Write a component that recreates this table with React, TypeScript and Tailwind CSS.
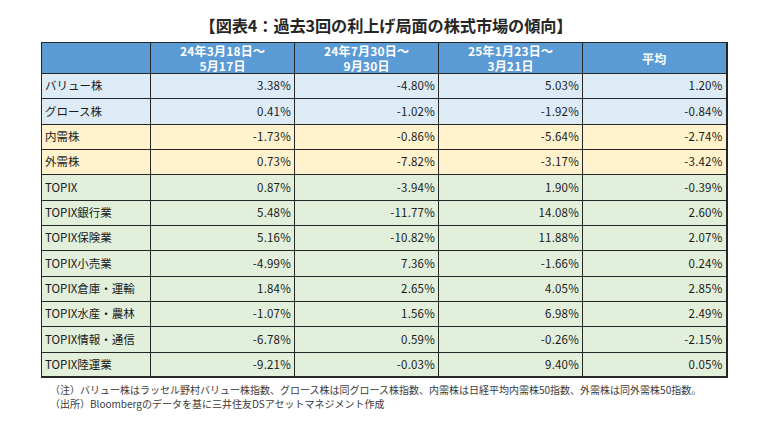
const rows: { label: string; tone: "blue" | "yellow" | "green"; values: string[] }[] = [
  { label: "バリュー株", tone: "blue", values: ["3.38%", "-4.80%", "5.03%", "1.20%"] },
  { label: "グロース株", tone: "blue", values: ["0.41%", "-1.02%", "-1.92%", "-0.84%"] },
  { label: "内需株", tone: "yellow", values: ["-1.73%", "-0.86%", "-5.64%", "-2.74%"] },
  { label: "外需株", tone: "yellow", values: ["0.73%", "-7.82%", "-3.17%", "-3.42%"] },
  { label: "TOPIX", tone: "green", values: ["0.87%", "-3.94%", "1.90%", "-0.39%"] },
  { label: "TOPIX銀行業", tone: "green", values: ["5.48%", "-11.77%", "14.08%", "2.60%"] },
  { label: "TOPIX保険業", tone: "green", values: ["5.16%", "-10.82%", "11.88%", "2.07%"] },
  { label: "TOPIX小売業", tone: "green", values: ["-4.99%", "7.36%", "-1.66%", "0.24%"] },
  { label: "TOPIX倉庫・運輸", tone: "green", values: ["1.84%", "2.65%", "4.05%", "2.85%"] },
  { label: "TOPIX水産・農林", tone: "green", values: ["-1.07%", "1.56%", "6.98%", "2.49%"] },
  { label: "TOPIX情報・通信", tone: "green", values: ["-6.78%", "0.59%", "-0.26%", "-2.15%"] },
  { label: "TOPIX陸運業", tone: "green", values: ["-9.21%", "-0.03%", "9.40%", "0.05%"] },
];

const toneBg = {
  blue: "bg-[#ddebf7]",
  yellow: "bg-[#fff2cc]",
  green: "bg-[#e2efda]",
};

const headers: [string, string?][] = [
  ["24年3月18日～", "5月17日"],
  ["24年7月30日～", "9月30日"],
  ["25年1月23日～", "3月21日"],
  ["平均"],
];

export default function App() {
  return (
    <div className="h-[433px] w-[770px] bg-white font-['Noto_Sans_CJK_JP',sans-serif] text-[#1a1a1a]">
      <h1 className="pt-[14px] pl-[2px] text-center text-[16.2px] font-bold leading-[22px] tracking-[-0.1px] text-[#262626]">
        【図表4：過去3回の利上げ局面の株式市場の傾向】
      </h1>

      <div className="ml-[41px] mt-[6px] w-[685px]">
        <table className="w-full table-fixed border-collapse">
          <colgroup>
            <col className="w-[109px]" />
            <col className="w-[144px]" />
            <col className="w-[144px]" />
            <col className="w-[144px]" />
            <col className="w-[144px]" />
          </colgroup>
          <thead>
            <tr className="h-[31px] bg-[#5b9bd5]">
              <th className="border border-[#262626]" />
              {headers.map((h, i) => (
                <th
                  key={i}
                  className={`border border-[#262626] text-center text-[12px] font-bold leading-[15px] tracking-[0.2px] text-white ${
                    i === 3 ? "border-r-2" : ""
                  }`}
                >
                  <div>{h[0]}</div>
                  {h[1] && <div>{h[1]}</div>}
                </th>
              ))}
            </tr>
          </thead>
          <tbody>
            {rows.map((r, ri) => (
              <tr key={r.label} className={`h-[25.33px] ${toneBg[r.tone]}`}>
                <td
                  className={`border border-[#262626] pl-[3px] text-left text-[11.5px] leading-none ${
                    ri === rows.length - 1 ? "border-b-2" : ""
                  }`}
                >
                  {r.label}
                </td>
                {r.values.map((v, vi) => (
                  <td
                    key={vi}
                    className={`border border-[#262626] pr-[3px] text-right text-[11.5px] leading-none tracking-[0.2px] ${
                      vi === 3 ? "border-r-2" : ""
                    } ${ri === rows.length - 1 ? "border-b-2" : ""}`}
                  >
                    {v}
                  </td>
                ))}
              </tr>
            ))}
          </tbody>
        </table>
      </div>

      <div className="ml-[50px] mt-[5px] text-[10px] leading-[13.5px] text-[#3a3a3a]">
        <p>（注）バリュー株はラッセル野村バリュー株指数、グロース株は同グロース株指数、内需株は日経平均内需株50指数、外需株は同外需株50指数。</p>
        <p>（出所）Bloombergのデータを基に三井住友DSアセットマネジメント作成</p>
      </div>
    </div>
  );
}
